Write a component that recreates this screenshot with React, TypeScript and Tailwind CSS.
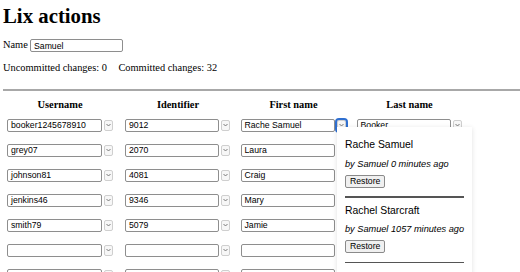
import React from "react";

const rows = [
  ["booker1245678910", "9012", "Rache Samuel", "Booker"],
  ["grey07", "2070", "Laura", ""],
  ["johnson81", "4081", "Craig", ""],
  ["jenkins46", "9346", "Mary", ""],
  ["smith79", "5079", "Jamie", ""],
  ["", "", "", ""],
  ["", "", "", ""],
];

const history = [
  { value: "Rache Samuel", meta: "by Samuel 0 minutes ago" },
  { value: "Rachel Starcraft", meta: "by Samuel 1057 minutes ago" },
];

function Chevron({ focused }: { focused?: boolean }) {
  return (
    <div
      className={
        "flex h-[11px] w-[9px] shrink-0 items-center justify-center rounded-[2px] border border-[#cfcfcf] bg-[#f7f7f7] " +
        (focused ? "outline-2 outline-[#2f6fd0]" : "")
      }
    >
      <svg width="5" height="4" viewBox="0 0 5 4">
        <path d="M0.5 1 L2.5 3 L4.5 1" fill="none" stroke="#6b6b6b" strokeWidth="0.9" />
      </svg>
    </div>
  );
}

function Field({ value, width }: { value: string; width: number }) {
  return (
    <div
      className="flex h-[13px] shrink-0 items-center rounded-[2px] border border-[#8e8e8e] bg-white px-[3px] font-['Liberation_Sans',Arial,sans-serif] text-[8.7px] leading-[10px] text-black"
      style={{ width }}
    >
      {value}
    </div>
  );
}

export default function App() {
  return (
    <div className="relative h-[272px] w-[520px] overflow-hidden bg-white font-['Liberation_Serif','Times_New_Roman',serif] text-[10.4px] leading-[12px] text-black">
      <h1 className="pl-[3px] pt-[3px] text-[20.8px] font-bold leading-[25px]">Lix actions</h1>

      <div className="mt-[11px] flex h-[13px] items-center pl-[3px]">
        <span className="mt-[-2px] w-[27px]">Name</span>
        <Field value="Samuel" width={93} />
      </div>

      <div className="mt-[10px] flex gap-[11.5px] pl-[3px]">
        <span>Uncommitted changes: 0</span>
        <span>Committed changes: 32</span>
      </div>

      <div className="ml-[3px] mt-[15px] h-[1.5px] bg-[#a8a8a8]" />

      <div className="mt-[8px] grid grid-cols-[118px_115.5px_116px_116px] pl-[7px] font-bold">
        <div className="w-[106px] text-center">Username</div>
        <div className="w-[106px] text-center">Identifier</div>
        <div className="w-[106px] text-center">First name</div>
        <div className="w-[106px] text-center">Last name</div>
      </div>

      <div className="mt-[8px] flex flex-col gap-[12px] pl-[7px]">
        {rows.map((r, i) => (
          <div key={i} className="grid grid-cols-[118px_115.5px_116px_116px]">
            {r.map((v, j) => (
              <div key={j} className="flex items-center gap-[2px]">
                <Field value={v} width={j === 0 ? 95 : 94} />
                <Chevron focused={i === 0 && j === 2} />
              </div>
            ))}
          </div>
        ))}
      </div>

      <div className="absolute left-[337px] top-[127px] h-[160px] w-[135px] bg-white px-[8px] pt-[12px] font-['Liberation_Sans',Arial,sans-serif] shadow-[0_1px_5px_rgba(0,0,0,0.12)]">
        {history.map((h, i) => (
          <div key={i} className="flex flex-col items-start">
            <div className="whitespace-nowrap text-[10.4px] leading-[12px]">{h.value}</div>
            <div className="mt-[6.5px] whitespace-nowrap text-[9.2px] italic leading-[12px]">{h.meta}</div>
            <button className="mt-[5px] h-[13px] rounded-[2px] border border-[#8a8a8a] bg-[#f0f0f0] px-[4px] text-[8.7px] leading-[11px]">
              Restore
            </button>
            <div className="mb-[7px] mt-[8.5px] h-[1.5px] w-full bg-[#555555]" />
          </div>
        ))}
      </div>
    </div>
  );
}
